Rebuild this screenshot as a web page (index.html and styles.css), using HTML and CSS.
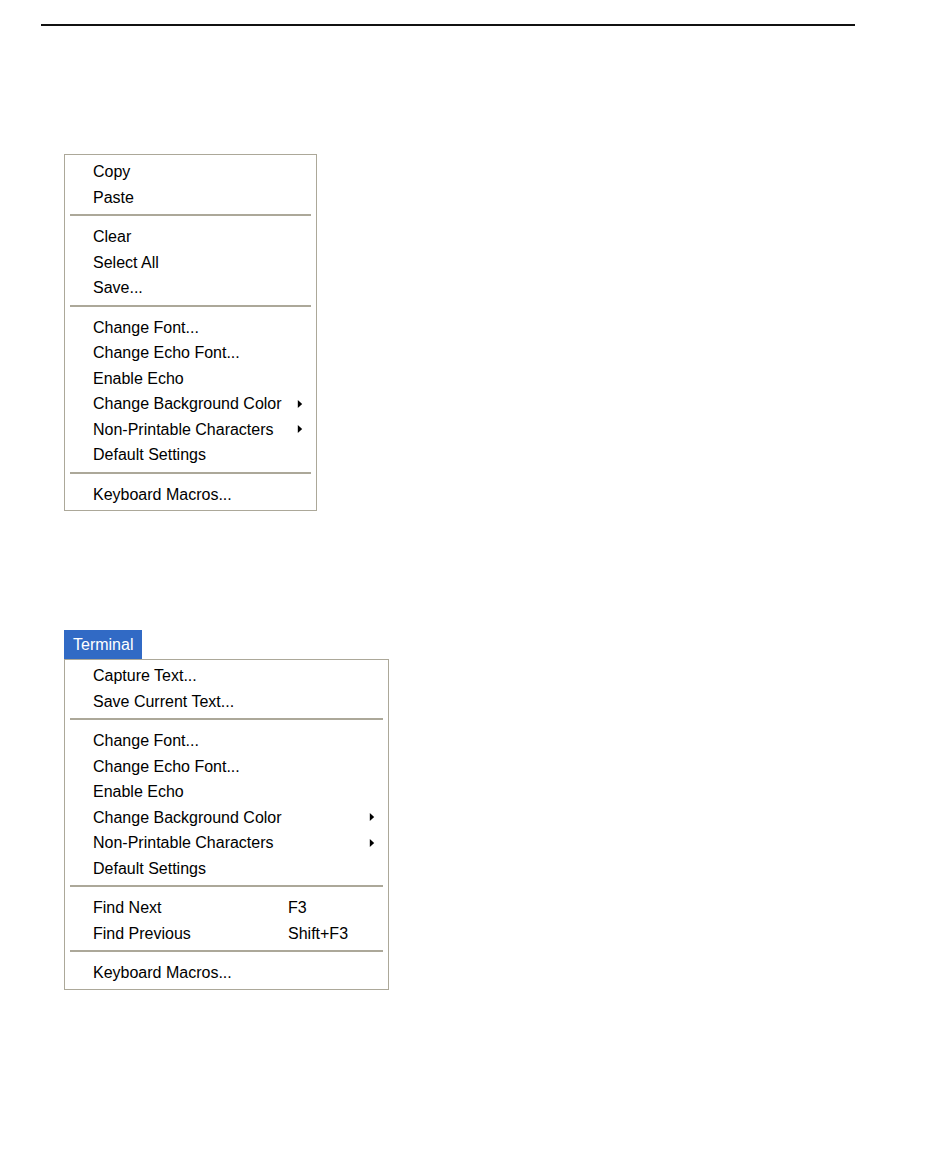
FILE: index.html
```html
<!DOCTYPE html>
<html lang="en">
<head>
  <meta charset="UTF-8" />
  <title>Terminal menus</title>
  <link rel="stylesheet" href="styles.css">
</head>
<body>
  <div class="page">
    <div class="rule"></div>

    <!-- context menu -->
    <div class="menu menu-context">
      <div class="item"><span class="label">Copy</span></div>
      <div class="item"><span class="label">Paste</span></div>
      <div class="sep"></div>
      <div class="item"><span class="label">Clear</span></div>
      <div class="item"><span class="label">Select All</span></div>
      <div class="item"><span class="label">Save...</span></div>
      <div class="sep"></div>
      <div class="item"><span class="label">Change Font...</span></div>
      <div class="item"><span class="label">Change Echo Font...</span></div>
      <div class="item"><span class="label">Enable Echo</span></div>
      <div class="item"><span class="label">Change Background Color</span><span class="arrow"></span></div>
      <div class="item"><span class="label">Non-Printable Characters</span><span class="arrow"></span></div>
      <div class="item"><span class="label">Default Settings</span></div>
      <div class="sep"></div>
      <div class="item"><span class="label">Keyboard Macros...</span></div>
    </div>

    <!-- Terminal menu -->
    <div class="dropdown">
      <div class="menu-title">Terminal</div>
      <div class="menu menu-terminal">
        <div class="item"><span class="label">Capture Text...</span></div>
        <div class="item"><span class="label">Save Current Text...</span></div>
        <div class="sep"></div>
        <div class="item"><span class="label">Change Font...</span></div>
        <div class="item"><span class="label">Change Echo Font...</span></div>
        <div class="item"><span class="label">Enable Echo</span></div>
        <div class="item"><span class="label">Change Background Color</span><span class="arrow"></span></div>
        <div class="item"><span class="label">Non-Printable Characters</span><span class="arrow"></span></div>
        <div class="item"><span class="label">Default Settings</span></div>
        <div class="sep"></div>
        <div class="item"><span class="label">Find Next</span><span class="key">F3</span></div>
        <div class="item"><span class="label">Find Previous</span><span class="key">Shift+F3</span></div>
        <div class="sep"></div>
        <div class="item"><span class="label">Keyboard Macros...</span></div>
      </div>
    </div>
  </div>
</body>
</html>
```

FILE: styles.css
```css
body {
  margin: 0;
  background: #fff;
  font-family: 'Liberation Sans', Arial, sans-serif;
  font-size: 16px;
  color: #000;
}
.page {
  padding: 24px 0 0 41px;
}
.rule {
  width: 814px;
  height: 2px;
  background: #111;
}
.menu {
  margin-left: 23px;
  border: 1px solid #aca899;
  background: #fff;
  padding: 2px 0 5px;
  box-sizing: border-box;
}
.menu-context {
  width: 253px;
  margin-top: 128px;
}
.dropdown {
  margin-top: 119px;
}
.menu-title {
  margin-left: 23px;
  display: inline-block;
  vertical-align: top;
  background: #316ac5;
  color: #fff;
  padding: 0 9px;
  height: 29px;
  line-height: 30px;
}
.menu-terminal {
  width: 325px;
  padding-top: 1px;
}
.item {
  display: flex;
  align-items: center;
  box-sizing: border-box;
  height: 25.5px;
  line-height: 21.5px;
  padding: 4px 14px 0 28px;
  white-space: nowrap;
}
.label {
  flex: 1;
}
.menu-terminal .item .label {
  flex: 0 0 195px;
}
.key {
  flex: 1;
}
.arrow {
  margin-left: auto;
  width: 0;
  height: 0;
  border-left: 4px solid #000;
  border-top: 4px solid transparent;
  border-bottom: 4px solid transparent;
  transform: scaleX(1.1);
}
.sep {
  height: 2px;
  margin: 6px 5px;
  background: #aca899;
}
```
